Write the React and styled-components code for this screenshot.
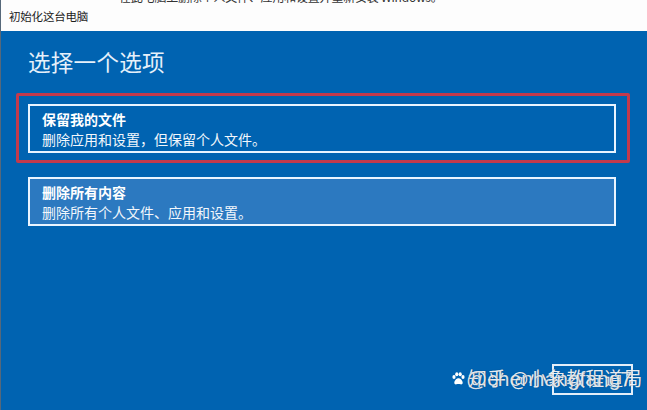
import React from "react";
import styled, { createGlobalStyle } from "styled-components";

const Global = createGlobalStyle`
  html, body { margin: 0; padding: 0; background: #0063b1; }
  body { font-family: "Microsoft YaHei", "Noto Sans CJK SC", "Noto Sans", sans-serif; }
  #root { width: 647px; height: 410px; overflow: hidden; }
`;

const Window = styled.div`
  position: relative;
  width: 647px;
  height: 410px;
  display: flex;
  flex-direction: column;
  border-left: 1px solid #56687a;
  box-sizing: border-box;
  overflow: hidden;
`;

const TitleBar = styled.div`
  position: relative;
  height: 31px;
  flex: none;
  background: #fdfdfd;
  display: flex;
  align-items: center;
  padding-left: 8px;
  font-size: 11.5px;
  color: #1c1c1c;
  letter-spacing: -0.2px;
`;

/* tail of a window title peeking above this one */
const PeekStrip = styled.div`
  position: absolute;
  top: 0;
  left: 118px;
  height: 3px;
  overflow: hidden;
  font-size: 12px;
  line-height: 12px;
  color: #333;
  white-space: nowrap;
  & > span { display: block; margin-top: -9px; }
`;

const Panel = styled.div`
  flex: 1;
  background: #0063b1;
  display: flex;
  flex-direction: column;
  padding: 16px 0 0 15px;
  color: #fff;
`;

const Heading = styled.h1`
  margin: 0 0 18px 12px;
  font-size: 22.5px;
  font-weight: 400;
  line-height: 28px;
  color: #e6f0fa;
  letter-spacing: 0.3px;
`;

const Options = styled.div`
  display: flex;
  flex-direction: column;
  gap: 14px;
`;

const Highlight = styled.div`
  width: 614px;
  box-sizing: border-box;
  border: 3px solid #c33a4c;
  border-radius: 2px;
  padding: 8px 11px 7px 9px;
`;

const Option = styled.div`
  width: 588px;
  height: 49px;
  box-sizing: border-box;
  margin-left: ${(p) => (p.$indent ? "12px" : "0")};
  border: 2px solid #e9f4ff;
  background: ${(p) => (p.$hover ? "#2c79c0" : "#0063b1")};
  padding: 3px 12px 0 12px;
  display: flex;
  flex-direction: column;
`;

const OptionTitle = styled.div`
  font-size: 14px;
  font-weight: 700;
  line-height: 20px;
  color: #ffffff;
`;

const OptionDesc = styled.div`
  font-size: 14px;
  line-height: 20px;
  color: #f2f7fc;
`;

const Footer = styled.div`
  margin-top: auto;
  display: flex;
  justify-content: flex-end;
  padding: 0 14px 15px 0;
`;

const Button = styled.div`
  width: 81px;
  height: 31px;
  box-sizing: border-box;
  border: 2px solid #e3eef9;
`;

const Watermark = styled.div`
  position: absolute;
  left: 451px;
  top: 366px;
  display: flex;
  align-items: center;
  gap: 3px;
  color: rgba(255, 255, 255, 0.92);
  text-shadow: 0 0 1px rgba(20, 40, 70, 0.6);
  pointer-events: none;
`;

const MarkCjk = styled.span`
  font-family: "Noto Sans CJK SC", sans-serif;
  font-size: 19px;
  line-height: 24px;
  white-space: nowrap;
`;

const MarkLatin = styled.span`
  position: absolute;
  left: 14px;
  top: 1px;
  font-family: "Liberation Sans", Arial, sans-serif;
  font-size: 21px;
  line-height: 24px;
  white-space: nowrap;
  color: rgba(255, 255, 255, 0.85);
`;

function Paw() {
  return (
    <svg width="13" height="13" viewBox="0 0 13 13" aria-hidden="true">
      <g fill="#fff">
        <ellipse cx="2" cy="5" rx="1.6" ry="2" />
        <ellipse cx="4.8" cy="2.2" rx="1.6" ry="2" />
        <ellipse cx="8.2" cy="2.2" rx="1.6" ry="2" />
        <ellipse cx="11" cy="5" rx="1.6" ry="2" />
        <path d="M6.5 6.2c-2 0-4.2 2.4-4.2 4.6 0 1.300 1.2 1.8 2.2 1.5.8-.2 1.3-.4 2-.4s1.2.2 2 .4c1 .3 2.2-.2 2.2-1.5 0-2.2-2.2-4.6-4.2-4.6z" />
      </g>
    </svg>
  );
}

export default function App() {
  return (
    <>
      <Global />
      <Window>
        <TitleBar>
          <PeekStrip>
            <span>在此电脑上删除个人文件、应用和设置并重新安装 Windows。</span>
          </PeekStrip>
          初始化这台电脑
        </TitleBar>
        <Panel>
          <Heading>选择一个选项</Heading>
          <Options>
            <Highlight>
              <Option>
                <OptionTitle>保留我的文件</OptionTitle>
                <OptionDesc>删除应用和设置，但保留个人文件。</OptionDesc>
              </Option>
            </Highlight>
            <Option $indent $hover>
              <OptionTitle>删除所有内容</OptionTitle>
              <OptionDesc>删除所有个人文件、应用和设置。</OptionDesc>
            </Option>
          </Options>
          <Footer>
            <Button />
          </Footer>
        </Panel>
        <Watermark>
          <Paw />
          <MarkCjk>知乎 @小象教程道局</MarkCjk>
          <MarkLatin>@chenhangfang7</MarkLatin>
        </Watermark>
      </Window>
    </>
  );
}
